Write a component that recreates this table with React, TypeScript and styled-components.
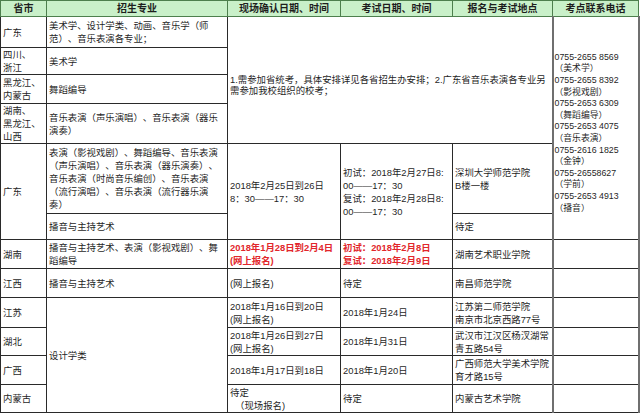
import React from 'react';
import styled, { createGlobalStyle } from 'styled-components';

const GlobalStyle = createGlobalStyle`
  html, body {
    margin: 0;
    padding: 0;
    background: #ffffff;
  }
  body {
    font-family: "Liberation Sans", "Noto Sans CJK SC", sans-serif;
    text-spacing-trim: space-all;
  }
`;

const Table = styled.table`
  border-collapse: collapse;
  table-layout: fixed;
  width: 638px;
  font-size: 9.4px;
  line-height: 13px;
  color: #1f1f1f;
`;

const HeadCell = styled.th`
  background: #c9f0c9;
  border: 1px solid #4d7f4d;
  font-weight: bold;
  font-size: 10px;
  line-height: 12px;
  height: 15px;
  padding: 0;
  text-align: center;
  color: #1e1e1e;
`;

const Row = styled.tr<{ $h: number }>`
  height: ${p => p.$h}px;
`;

const Cell = styled.td<{ $nowrap?: boolean }>`
  border: 1px solid #2a2a2a;
  padding: 0 1px 0 2px;
  vertical-align: middle;
  text-align: left;
  overflow: hidden;
  white-space: ${p => (p.$nowrap ? 'nowrap' : 'normal')};
`;

const NoticeCell = styled(Cell)`
  padding-top: 10px;
  line-height: 11.5px;
  white-space: nowrap;
`;

const PhoneCell = styled(Cell)<{ $shift?: boolean }>`
  border-left: 2px solid #6f6f6f;
  border-right: 2px solid #6f6f6f;
  padding: ${p => (p.$shift ? '10px 1px 0' : '0 1px')};
  font-size: 8.8px;
  line-height: 11.6px;
  white-space: nowrap;
`;

const Red = styled.span`
  color: #e2262b;
  font-weight: bold;
`;

const Indent = styled.span`
  padding-left: 5px;
`;

const phones: [string, string][] = [
  ['0755-2655 8569', '（美术学）'],
  ['0755-2655 8392', '（影视戏剧）'],
  ['0755-2653 6309', '（舞蹈编导）'],
  ['0755-2653 4075', '（音乐表演）'],
  ['0755-2616 1825', '（金钟）'],
  ['0755-26558627', '（学前）'],
  ['0755-2653 4913', '（播音）'],
];

const widths = [46, 181, 113, 112, 100, 86];

export default function App() {
  return (
    <>
      <GlobalStyle />
      <Table>
        <colgroup>
          {widths.map((w, i) => (
            <col key={i} style={{ width: w }} />
          ))}
        </colgroup>
        <thead>
          <tr>
            <HeadCell>省市</HeadCell>
            <HeadCell>招生专业</HeadCell>
            <HeadCell>现场确认日期、时间</HeadCell>
            <HeadCell>考试日期、时间</HeadCell>
            <HeadCell>报名与考试地点</HeadCell>
            <HeadCell>考点联系电话</HeadCell>
          </tr>
        </thead>
        <tbody>
          <Row $h={31}>
            <Cell>广东</Cell>
            <Cell>美术学、设计学类、动画、音乐学（师范）、音乐表演各专业；</Cell>
            <NoticeCell colSpan={3} rowSpan={4}>
              1.需参加省统考，具体安排详见各省招生办安排；2.广东省音乐表演各专业另
              <br />
              需参加我校组织的校考；
            </NoticeCell>
            <PhoneCell rowSpan={6} $shift>
              {phones.map(([num, label]) => (
                <React.Fragment key={num}>
                  {num}
                  <br />
                  {label}
                  <br />
                </React.Fragment>
              ))}
            </PhoneCell>
          </Row>
          <Row $h={26}>
            <Cell $nowrap>
              四川、
              <br />
              浙江
            </Cell>
            <Cell>美术学</Cell>
          </Row>
          <Row $h={29}>
            <Cell $nowrap>
              黑龙江、
              <br />
              内蒙古
            </Cell>
            <Cell>舞蹈编导</Cell>
          </Row>
          <Row $h={40}>
            <Cell $nowrap>
              湖南、
              <br />
              黑龙江、
              <br />
              山西
            </Cell>
            <Cell>音乐表演（声乐演唱）、音乐表演（器乐演奏）</Cell>
          </Row>
          <Row $h={70}>
            <Cell rowSpan={2}>广东</Cell>
            <Cell>
              表演（影视戏剧）、舞蹈编导、音乐表演（声乐演唱）、音乐表演（器乐演奏）、音乐表演（时尚音乐编创）、音乐表演（流行演唱）、音乐表演（流行器乐演奏）
            </Cell>
            <Cell rowSpan={2} $nowrap>
              2018年2月25日到26日
              <br />
              8：30——17：30
            </Cell>
            <Cell rowSpan={2} $nowrap>
              初试：2018年2月27日8:
              <br />
              00——17：30
              <br />
              复试：2018年2月28日8:
              <br />
              00——17：30
            </Cell>
            <Cell $nowrap>
              深圳大学师范学院
              <br />
              B楼一楼
            </Cell>
          </Row>
          <Row $h={26}>
            <Cell>播音与主持艺术</Cell>
            <Cell>待定</Cell>
          </Row>
          <Row $h={29}>
            <Cell>湖南</Cell>
            <Cell>播音与主持艺术、表演（影视戏剧）、舞蹈编导</Cell>
            <Cell $nowrap>
              <Red>
                2018年1月28日到2月4日
                <br />
                (网上报名)
              </Red>
            </Cell>
            <Cell $nowrap>
              <Red>
                初试：2018年2月8日
                <br />
                复试：2018年2月9日
              </Red>
            </Cell>
            <Cell $nowrap>湖南艺术职业学院</Cell>
            <PhoneCell />
          </Row>
          <Row $h={29}>
            <Cell>江西</Cell>
            <Cell>播音与主持艺术</Cell>
            <Cell $nowrap>(网上报名)</Cell>
            <Cell>待定</Cell>
            <Cell $nowrap>南昌师范学院</Cell>
            <PhoneCell />
          </Row>
          <Row $h={30}>
            <Cell>江苏</Cell>
            <Cell rowSpan={4}>设计学类</Cell>
            <Cell $nowrap>
              2018年1月16日到20日
              <br />
              (网上报名)
            </Cell>
            <Cell $nowrap>2018年1月24日</Cell>
            <Cell $nowrap>
              江苏第二师范学院
              <br />
              南京市北京西路77号
            </Cell>
            <PhoneCell />
          </Row>
          <Row $h={28}>
            <Cell>湖北</Cell>
            <Cell $nowrap>
              2018年1月26日到27日
              <br />
              (网上报名)
            </Cell>
            <Cell $nowrap>2018年1月31日</Cell>
            <Cell $nowrap>
              武汉市江汉区杨汊湖常
              <br />
              青五路54号
            </Cell>
            <PhoneCell />
          </Row>
          <Row $h={29}>
            <Cell>广西</Cell>
            <Cell $nowrap>2018年1月17日到18日</Cell>
            <Cell $nowrap>2018年1月20日</Cell>
            <Cell $nowrap>
              广西师范大学美术学院
              <br />
              育才路15号
            </Cell>
            <PhoneCell />
          </Row>
          <Row $h={28}>
            <Cell $nowrap>内蒙古</Cell>
            <Cell $nowrap>
              待定
              <br />
              <Indent>（现场报名)</Indent>
            </Cell>
            <Cell>待定</Cell>
            <Cell $nowrap>内蒙古艺术学院</Cell>
            <PhoneCell />
          </Row>
        </tbody>
      </Table>
    </>
  );
}
